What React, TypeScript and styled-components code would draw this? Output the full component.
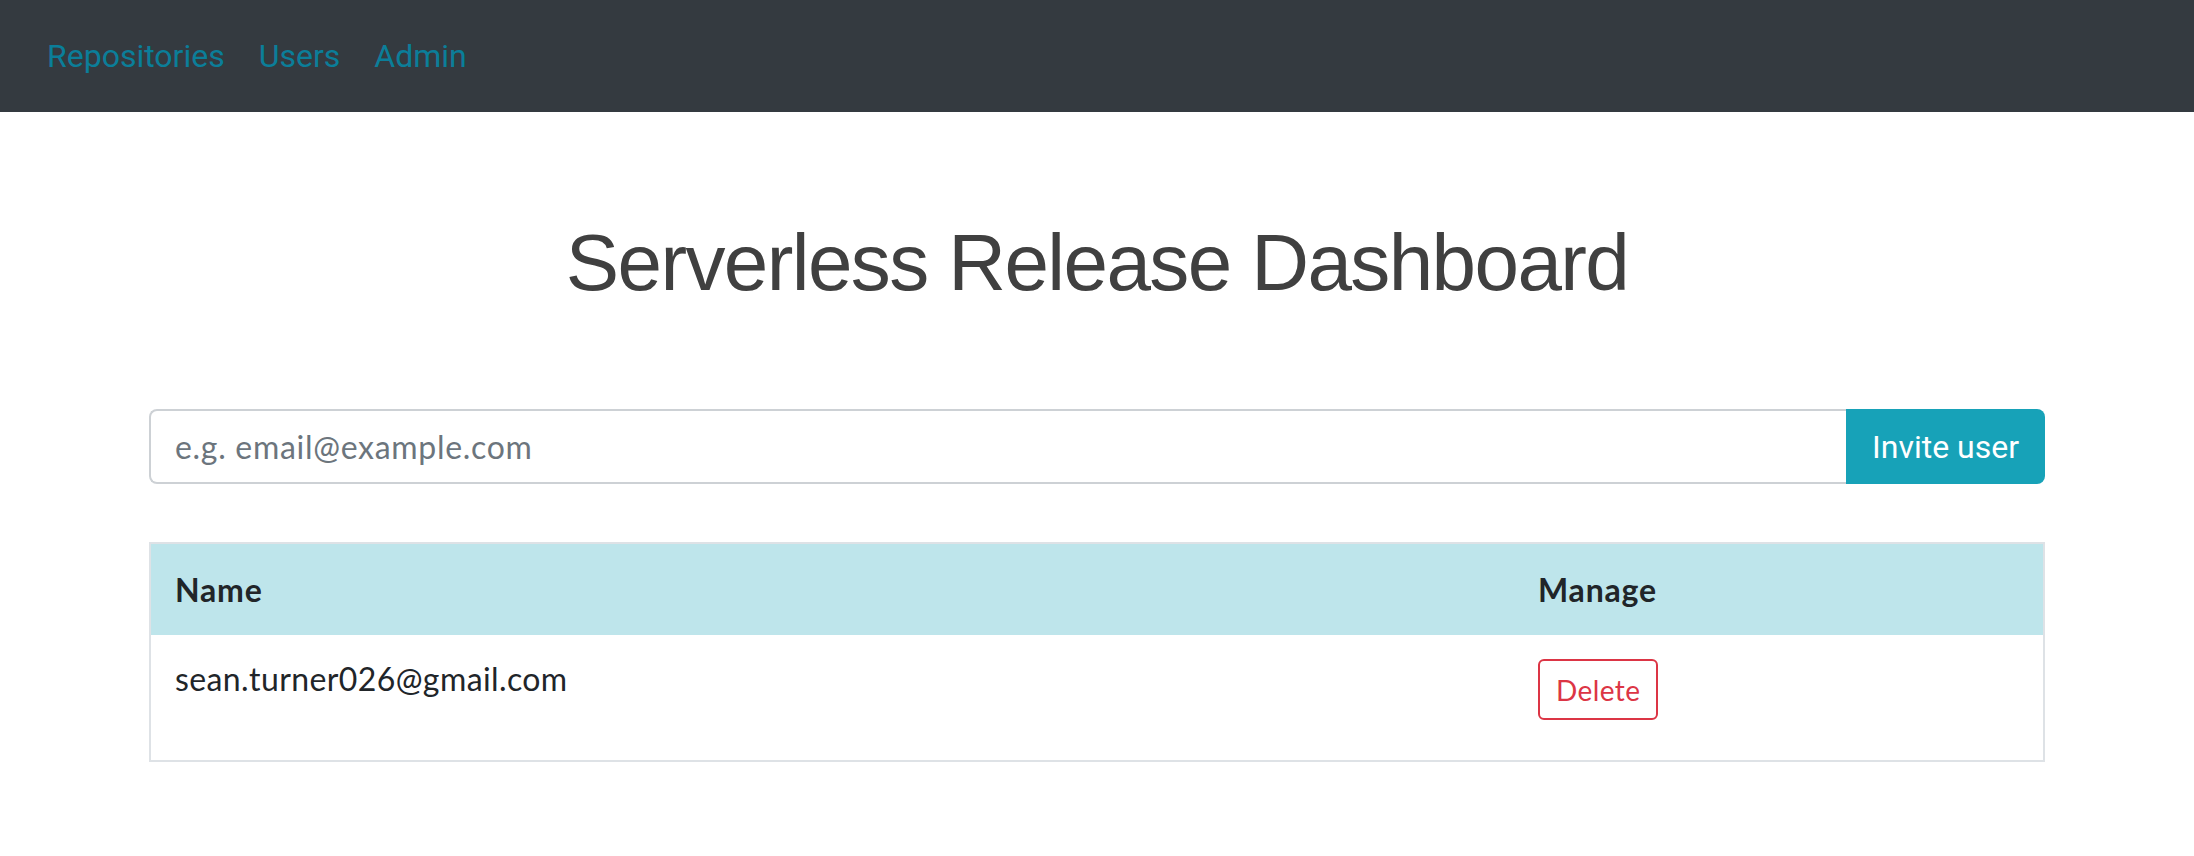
import React from "react";
import styled, { createGlobalStyle } from "styled-components";

const GlobalStyle = createGlobalStyle`
  *, *::before, *::after {
    box-sizing: border-box;
  }

  body {
    margin: 0;
    background: #ffffff;
    font-family: "Lato", "Noto Sans", sans-serif;
    color: #212529;
  }
`;

const Navbar = styled.nav`
  display: flex;
  align-items: center;
  height: 112px;
  padding: 0 30px;
  background: #343a40;
`;

const NavLink = styled.a`
  padding: 0 17px;
  font-family: "Roboto", "Liberation Sans", sans-serif;
  font-size: 32px;
  line-height: 48px;
  color: #0b7e99;
  text-decoration: none;
  cursor: pointer;
`;

const Container = styled.main`
  max-width: 1896px;
  margin: 0 auto;
`;

const Title = styled.h1`
  margin: 103px 0 98px;
  text-align: center;
  font-family: "Liberation Sans", "Helvetica", sans-serif;
  font-size: 80px;
  font-weight: 400;
  line-height: 96px;
  letter-spacing: -1.6px;
  color: #404040;
`;

const InviteForm = styled.form`
  display: flex;
  height: 75px;
  margin-bottom: 58px;
`;

const EmailInput = styled.input`
  flex: 1;
  min-width: 0;
  height: 100%;
  padding: 0 24px;
  border: 2px solid #cdd1d5;
  border-right: none;
  border-radius: 8px 0 0 8px;
  font-family: "Lato", "Noto Sans", sans-serif;
  font-size: 32px;
  letter-spacing: 0.7px;
  color: #495057;
  outline: none;

  &::placeholder {
    color: #6c757d;
  }
`;

const InviteButton = styled.button`
  height: 100%;
  padding: 0 26px;
  border: none;
  border-radius: 0 8px 8px 0;
  background: #17a2b8;
  font-family: "Roboto", "Liberation Sans", sans-serif;
  font-size: 32px;
  color: #ffffff;
  cursor: pointer;
`;

const Table = styled.table`
  width: 100%;
  table-layout: fixed;
  border: 2px solid #dee2e6;
  border-collapse: separate;
  border-spacing: 0;
`;

const HeadCell = styled.th<{ $width?: number }>`
  width: ${(p) => (p.$width ? `${p.$width}px` : "auto")};
  height: 91px;
  padding: 0 24px;
  background: #bee5eb;
  text-align: left;
  vertical-align: middle;
  font-size: 32px;
  font-weight: 700;
  letter-spacing: 0.8px;
  color: #212529;
`;

const Cell = styled.td`
  height: 125px;
  padding: 24px 24px 0;
  vertical-align: top;
  font-size: 32px;
  line-height: 40px;
  letter-spacing: 0.4px;
  color: #212529;
`;

const DeleteButton = styled.button`
  height: 61px;
  padding: 0 16px;
  border: 2px solid #dc3545;
  border-radius: 6px;
  background: transparent;
  font-family: "Lato", "Noto Sans", sans-serif;
  font-size: 28px;
  letter-spacing: 0.4px;
  color: #dc3545;
  cursor: pointer;
`;

const users = ["sean.turner026@gmail.com"];

export default function App() {
  return (
    <>
      <GlobalStyle />
      <Navbar>
        <NavLink>Repositories</NavLink>
        <NavLink>Users</NavLink>
        <NavLink>Admin</NavLink>
      </Navbar>
      <Container>
        <Title>Serverless Release Dashboard</Title>
        <InviteForm onSubmit={(e) => e.preventDefault()}>
          <EmailInput type="email" placeholder="e.g. email@example.com" />
          <InviteButton type="submit">Invite user</InviteButton>
        </InviteForm>
        <Table>
          <thead>
            <tr>
              <HeadCell $width={1363}>Name</HeadCell>
              <HeadCell>Manage</HeadCell>
            </tr>
          </thead>
          <tbody>
            {users.map((email) => (
              <tr key={email}>
                <Cell>{email}</Cell>
                <Cell>
                  <DeleteButton type="button">Delete</DeleteButton>
                </Cell>
              </tr>
            ))}
          </tbody>
        </Table>
      </Container>
    </>
  );
}
